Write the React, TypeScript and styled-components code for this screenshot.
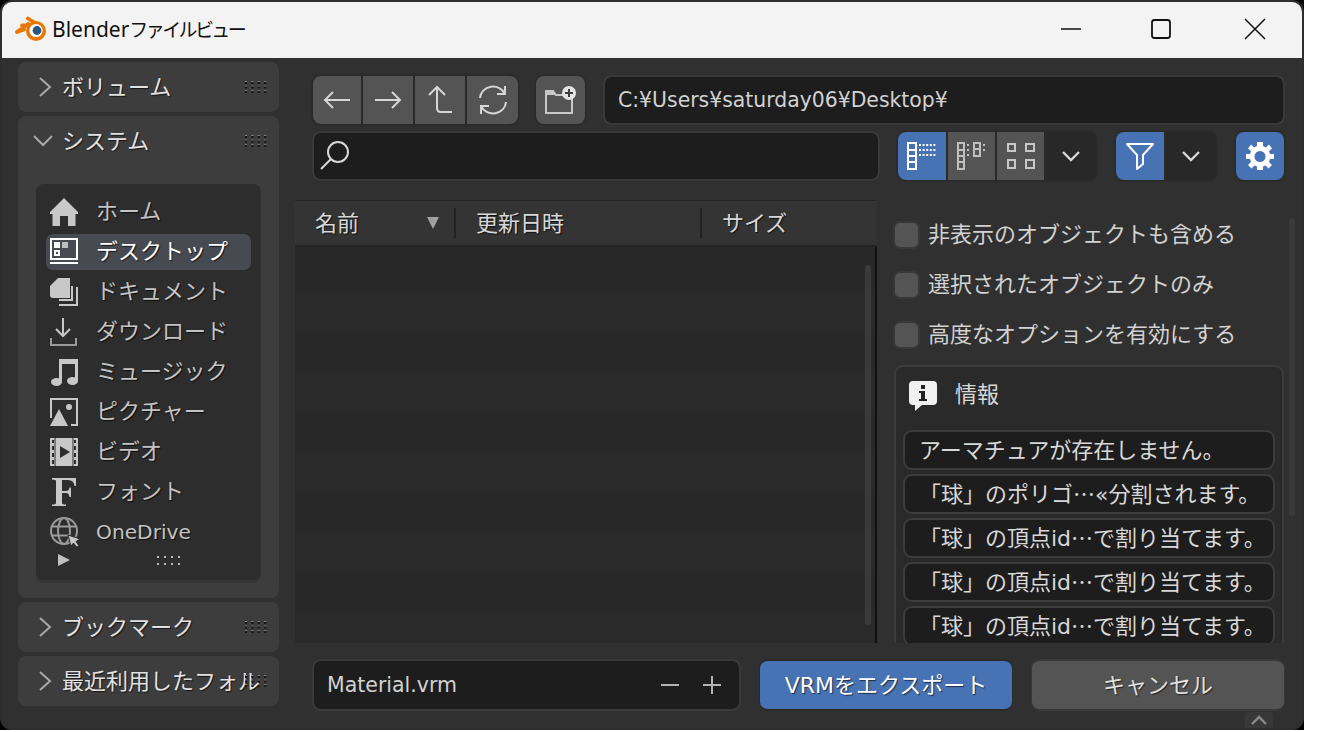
import React from 'react';
import styled, { createGlobalStyle } from 'styled-components';

const GlobalStyle = createGlobalStyle`
  html, body {
    margin: 0;
    padding: 0;
    background: #fff;
  }
  * {
    box-sizing: border-box;
  }
`;

const UI_FONT = `"DejaVu Sans", "Noto Sans CJK JP", sans-serif`;

const Frame = styled.div`
  width: 1304px;
  height: 730px;
  background: #000;
`;

const Win = styled.div`
  width: 100%;
  height: 100%;
  background: #303030;
  border: 2px solid #2e2e2e;
  border-radius: 12px;
  overflow: hidden;
  display: flex;
  flex-direction: column;
  font-family: ${UI_FONT};
  font-size: 22px;
  color: #d2d2d2;
`;

const TitleBar = styled.div`
  height: 56px;
  flex: none;
  background: #f3f3f3;
  display: flex;
  align-items: center;
  padding: 0 0 2px 13px;
  color: #111;
  font-family: "Noto Sans", "Noto Sans CJK JP", sans-serif;
  font-size: 21px;
`;

const TitleText = styled.span`
  margin-left: 5px;
  flex: 1;
`;

const TitleKana = styled.span`
  font-size: 19px;
  letter-spacing: -2.6px;
`;

const WinButton = styled.div`
  width: 94px;
  height: 54px;
  display: flex;
  align-items: center;
  justify-content: center;
`;

const Body = styled.div`
  flex: 1;
  min-height: 0;
  display: flex;
`;

const Sidebar = styled.div`
  width: 293px;
  flex: none;
  padding: 4px 0 0 16px;
  display: flex;
  flex-direction: column;
  gap: 4px;
`;

const Panel = styled.div<{ $h: number }>`
  width: 261px;
  height: ${p => p.$h}px;
  background: #3d3d3d;
  border-radius: 8px;
  flex: none;
`;

const PanelHead = styled.div`
  height: 50px;
  display: flex;
  align-items: center;
  padding-left: 44px;
  position: relative;
`;

const Chevron = styled.svg<{ $left: number }>`
  position: absolute;
  left: ${p => p.$left}px;
  top: 13px;
`;

const PanelLabel = styled.div`
  flex: 0 0 198px;
  overflow: hidden;
  white-space: nowrap;
  padding-bottom: 4px;
  color: #e2e2e2;
  text-shadow: 1px 1px 1px rgba(0, 0, 0, 0.65);
`;

const Grip = styled.div`
  margin-left: -15px;
  flex: none;
`;

const PlaceList = styled.div`
  margin: 18px 0 0 18px;
  width: 225px;
  height: 396px;
  background: #2d2d2d;
  border-radius: 8px;
  padding: 10px 10px 0;
  box-shadow: 0 3px 0 #353535;
`;

const Place = styled.div<{ $active?: boolean }>`
  height: 36px;
  margin-bottom: 4px;
  border-radius: 7px;
  padding-left: 4px;
  display: flex;
  align-items: center;
  gap: 18px;
  background: ${p => (p.$active ? '#474a51' : 'transparent')};
  color: ${p => (p.$active ? '#fff' : '#c4c4c4')};
  text-shadow: 1px 1px 1px rgba(0, 0, 0, 0.7);
  white-space: nowrap;
`;

const IconBox = styled.span`
  width: 28px;
  height: 30px;
  flex: none;
  display: flex;
  align-items: center;
  justify-content: flex-start;

  svg {
    flex: none;
  }
`;

const PlaceName = styled.span<{ $latin?: boolean }>`
  padding-bottom: ${p => (p.$latin ? '0' : '6px')};
  font-size: ${p => (p.$latin ? '20.2px' : '22px')};
`;

const ListFooter = styled.div`
  display: flex;
  align-items: flex-start;
  height: 14px;
  padding-left: 12px;
  gap: 87px;
`;

const Main = styled.div`
  flex: 1;
  min-width: 0;
  display: flex;
  flex-direction: column;
`;

const Toolbar = styled.div<{ $top: number }>`
  height: 50px;
  margin-top: ${p => p.$top}px;
  padding: 0 17px;
  display: flex;
  align-items: stretch;
  flex: none;
`;

const Group = styled.div<{ $ml?: number }>`
  display: flex;
  gap: 2px;
  border: 1px solid #2a2a2a;
  background: #2a2a2a;
  box-shadow: 0 0 0 1px #2c2c2c;
  border-radius: 9px;
  overflow: hidden;
  flex: none;
  margin-left: ${p => p.$ml ?? 0}px;
`;

const ToolButton = styled.div<{ $w: number; $tone?: 'blue' | 'dark' }>`
  width: ${p => p.$w}px;
  display: flex;
  align-items: center;
  justify-content: center;
  background: ${p => (p.$tone === 'blue' ? '#4772b3' : p.$tone === 'dark' ? '#282828' : '#545454')};
`;

const TextField = styled.div<{ $w?: number }>`
  background: #1d1d1d;
  border: 2px solid #3a3a3a;
  border-radius: 9px;
  display: flex;
  align-items: center;
  padding-left: 13px;
  ${p => (p.$w ? `flex: 0 0 ${p.$w}px;` : 'flex: 1;')}
`;

const Path = styled(TextField)`
  margin-left: 17px;
  font-size: 20.4px;
  white-space: nowrap;
`;

const Content = styled.div`
  height: 443px;
  margin-top: 19px;
  display: flex;
  flex: none;
`;

const FileList = styled.div`
  width: 582px;
  flex: none;
  display: flex;
  flex-direction: column;
  border-right: 2px solid #111;
`;

const FileHead = styled.div`
  height: 47px;
  flex: none;
  background: #343434;
  border-top: 1px solid #252525;
  border-bottom: 2px solid #242424;
  margin-right: -2px;
  display: flex;
  align-items: center;
  text-shadow: 1px 1px 1px rgba(0, 0, 0, 0.7);
  color: #d8d8d8;
`;

const Column = styled.div<{ $w: number; $border?: boolean }>`
  width: ${p => p.$w}px;
  height: 30px;
  padding-left: 20px;
  display: flex;
  align-items: center;
  justify-content: space-between;
  padding-right: 14px;
  border-right: ${p => (p.$border ? '2px solid #222' : 'none')};
`;

const ColumnText = styled.span`
  padding-bottom: 5px;
`;

const FileBody = styled.div`
  flex: 1;
  min-height: 0;
  display: flex;
  flex-direction: column;
  background: #282828;
  padding-top: 4px;
  overflow: hidden;
  position: relative;
`;

const Stripe = styled.div<{ $odd: boolean }>`
  height: 40px;
  flex: none;
  background: ${p => (p.$odd ? '#2a2a2a' : '#282828')};
`;

const Scroll = styled.div<{ $top: number; $h: number; $right: number }>`
  position: absolute;
  top: ${p => p.$top}px;
  right: ${p => p.$right}px;
  width: 6px;
  height: ${p => p.$h}px;
  border-radius: 3px;
  background: #3a3a3a;
`;

const Side = styled.div`
  flex: 1;
  min-width: 0;
  position: relative;
  padding: 18px 19px 0 16px;
  overflow: hidden;
`;

const CheckRow = styled.div`
  height: 50px;
  padding-top: 3px;
  display: flex;
  gap: 8px;
  white-space: nowrap;
  align-items: flex-start;
  line-height: 27px;
`;

const Check = styled.div`
  width: 27px;
  height: 28px;
  flex: none;
  background: #545454;
  border: 2px solid #383838;
  border-radius: 7px;
`;

const Info = styled.div`
  margin: -3px 0 0 1px;
  width: 390px;
  height: 330px;
  background: #2a2a2a;
  border: 2px solid #3c3c3c;
  border-radius: 9px;
  padding: 0 7px;
`;

const InfoHead = styled.div`
  height: 63px;
  display: flex;
  align-items: center;
  padding: 0 0 6px 6px;
  gap: 18px;
  color: #d8d8d8;
`;

const InfoTitle = styled.span`
  padding-bottom: 7px;
`;

const Message = styled.div`
  height: 40px;
  margin-bottom: 4px;
  background: #1d1d1d;
  border: 2px solid #3c3c3c;
  border-radius: 9px;
  padding: 0 0 4px 14px;
  display: flex;
  align-items: center;
  white-space: pre;
  color: #d8d8d8;
`;

const Dots = styled.span`
  font-family: "Noto Sans CJK JP", sans-serif;
`;

const Bottom = styled.div`
  height: 52px;
  margin-top: 16px;
  padding: 0 17px;
  display: flex;
  flex: none;
  gap: 18px;
`;

const Name = styled(TextField)`
  font-size: 20.5px;
  justify-content: space-between;
  padding-right: 17px;
`;

const Steppers = styled.div`
  display: flex;
  gap: 22px;
`;

const ActionButton = styled.div<{ $primary?: boolean }>`
  flex: 0 0 254px;
  display: flex;
  align-items: center;
  justify-content: center;
  padding-bottom: 5px;
  border-radius: 9px;
  border-style: solid;
  border-width: 2px 1px;
  border-color: ${p => (p.$primary ? '#2a2a2a' : '#383838')};
  background: ${p => (p.$primary ? '#4772b3' : '#545454')};
  color: ${p => (p.$primary ? '#fff' : '#e0e0e0')};
  text-shadow: 1px 1px 1px rgba(0, 0, 0, 0.6);
  white-space: nowrap;
`;

const TabRow = styled.div`
  flex: 1;
  display: flex;
  justify-content: flex-end;
  align-items: flex-end;
  padding-right: 29px;
`;

const CornerTab = styled.div`
  width: 28px;
  height: 16px;
  background: #383838;
  border-radius: 4px 4px 0 0;
  display: flex;
  align-items: center;
  justify-content: center;
`;

const GripDots = ({ plain }: { plain?: boolean }) => (
  <svg width="24" height="12" style={{ display: 'block' }}>
    {(plain ? [0, 1] : [0, 1, 2]).map(r =>
      [0, 1, 2, 3].map(c =>
        plain ? (
          <rect key={`${r}-${c}`} x={c * 7} y={r * 7 + 2} width="2" height="2" fill="#b8b8b8" />
        ) : (
          <g key={`${r}-${c}`}>
            <rect x={c * 6.4} y={r * 4.6} width="2" height="1" fill="#8a8a8a" />
            <rect x={c * 6.4} y={r * 4.6 + 1} width="2" height="2" fill="#111" />
          </g>
        ),
      ),
    )}
  </svg>
);

const BlenderLogo = () => (
  <svg width="32" height="28" viewBox="0 0 32 28" style={{ display: 'block' }}>
    <path d="M2 17 L13 9 M7 10.5 L15 10.5 M13 3.5 L20 8 M2 17 L9 14.5" stroke="#ea7600" strokeWidth="3.8" strokeLinecap="round" fill="none" />
    <circle cx="21" cy="16" r="10" fill="#ea7600" />
    <circle cx="21" cy="15.5" r="6.6" fill="#fff" />
    <circle cx="22" cy="15.5" r="4.4" fill="#265787" />
  </svg>
);

const ico = { stroke: '#d6d6d6', fill: 'none', strokeWidth: 2 };

const HomeIcon = () => (
  <svg width="28" height="28" viewBox="0 0 28 28">
    <path fill="#c8c8c8" d="M14 0 L28 14 V16 H25.5 V28 H18 V18 H10 V28 H2.5 V16 H0 V14 Z" />
  </svg>
);

const DesktopIcon = () => (
  <svg width="28" height="28" viewBox="0 0 28 28">
    <rect x="1" y="1" width="26" height="20" fill="none" stroke="#fff" strokeWidth="2" />
    <rect x="4" y="4" width="6" height="6" fill="#fff" />
    <rect x="12" y="4" width="6" height="6" fill="#bdbdbd" />
    <rect x="5" y="13" width="4" height="4" fill="none" stroke="#fff" strokeWidth="2" />
    <rect x="0" y="24" width="28" height="2" fill="#fff" />
  </svg>
);

const DocIcon = () => (
  <svg width="28" height="28" viewBox="0 0 28 28">
    <path fill="#c8c8c8" d="M8 0 H20 V20 H3 Q0 20 0 17 V8 Z" />
    <path d="M22 8 V22 H9 M27 9 V27 H9" fill="none" stroke="#c8c8c8" strokeWidth="2" />
  </svg>
);

const DownloadIcon = () => (
  <svg width="28" height="28" viewBox="0 0 28 28">
    <path d="M13 0 V18 M6 11 L13 18 L20 11" fill="none" stroke="#c8c8c8" strokeWidth="2" />
    <path d="M1 20 V27 H26 V20" fill="none" stroke="#9a9a9a" strokeWidth="2" />
  </svg>
);

const MusicIcon = () => (
  <svg width="28" height="28" viewBox="0 0 28 28">
    <path fill="#c8c8c8" d="M9 1 H28 V6 H12 V23 H9 Z M25 6 H28 V23 H25 Z" />
    <ellipse cx="6.5" cy="24" rx="5.5" ry="4" fill="#c8c8c8" />
    <ellipse cx="22.5" cy="23" rx="5.5" ry="4" fill="#c8c8c8" />
  </svg>
);

const ImageIcon = () => (
  <svg width="28" height="28" viewBox="0 0 28 28">
    <path d="M1 20 V1 H27 V27 H21" fill="none" stroke="#c8c8c8" strokeWidth="2" />
    <path fill="#c8c8c8" d="M0 28 L9 11 L18 28 Z" />
    <circle cx="19" cy="9" r="3" fill="#c8c8c8" />
  </svg>
);

const VideoIcon = () => (
  <svg width="28" height="28" viewBox="0 0 28 28">
    <path fill="#c8c8c8" fillRule="evenodd" d="M0 0 H28 V28 H0 Z M2 2 V5 H4 V2 Z M24 2 V5 H26 V2 Z M2 8 V12 H4 V8 Z M24 8 V12 H26 V8 Z M2 15 V19 H4 V15 Z M24 15 V19 H26 V15 Z M2 22 V26 H4 V22 Z M24 22 V26 H26 V22 Z M10 8 V20 L20 14 Z" />
    <path d="M5 0 V28 M23 0 V28" stroke="#2d2d2d" strokeWidth="1" />
  </svg>
);

const FontIcon = () => (
  <svg width="28" height="28" viewBox="0 0 28 28">
    <path fill="#c8c8c8" d="M2 0 H26 V8 H24.5 Q24 2 18 2 H12 V13 H16 Q19 13 19.5 9.5 H21 V19 H19.5 Q19 15 16 15 H12 V25 Q12 26.5 16 26.5 V28 H2 V26.5 Q6 26.5 6 25 V3 Q6 1.5 2 1.5 Z" />
  </svg>
);

const GlobeIcon = () => (
  <svg width="30" height="30" viewBox="0 0 30 30">
    <g fill="none" stroke="#9a9a9a" strokeWidth="2">
      <circle cx="14" cy="14" r="13" />
      <ellipse cx="14" cy="14" rx="6" ry="13" />
      <path d="M2 9.5 H26 M2 18.5 H20" />
    </g>
    <path fill="#c8c8c8" stroke="#2d2d2d" strokeWidth="1" d="M18 18 L30 22 L26 24.5 L29 29 L26.5 30 L23.5 26 L21 29 Z" />
  </svg>
);

const places = [
  { label: 'ホーム', icon: <HomeIcon /> },
  { label: 'デスクトップ', icon: <DesktopIcon />, active: true },
  { label: 'ドキュメント', icon: <DocIcon /> },
  { label: 'ダウンロード', icon: <DownloadIcon /> },
  { label: 'ミュージック', icon: <MusicIcon /> },
  { label: 'ピクチャー', icon: <ImageIcon /> },
  { label: 'ビデオ', icon: <VideoIcon /> },
  { label: 'フォント', icon: <FontIcon /> },
];

const Right = () => (
  <Chevron $left={15} width="24" height="24" viewBox="0 0 24 24">
    <path d="M7 3 L17 12 L7 21" fill="none" stroke="#a8a8a8" strokeWidth="2" />
  </Chevron>
);

const Down = () => (
  <Chevron $left={13} width="24" height="24" viewBox="0 0 24 24">
    <path d="M3 7 L12 16 L21 7" fill="none" stroke="#a8a8a8" strokeWidth="2" />
  </Chevron>
);

const Drop = () => (
  <svg width="20" height="12" viewBox="0 0 20 12">
    <path d="M2 2 L10 10 L18 2" fill="none" stroke="#d8d8d8" strokeWidth="2.4" />
  </svg>
);

const messages = [
  ['アーマチュアが存在しません。'],
  ['「球」のポリゴ', '«分割されます。'],
  ['「球」の頂点id', 'で割り当てます。'],
  ['「球」の頂点id', 'で割り当てます。'],
  ['「球」の頂点id', 'で割り当てます。'],
];

const App = () => {
  return (
    <>
      <GlobalStyle />
      <Frame>
        <Win>
          <TitleBar>
            <BlenderLogo />
            <TitleText>
              Blender<TitleKana>ファイルビュー</TitleKana>
            </TitleText>
            <WinButton>
              <svg width="22" height="22" style={{ marginLeft: 8 }}><path d="M1 11 H21" stroke="#111" strokeWidth="1.6" /></svg>
            </WinButton>
            <WinButton>
              <svg width="22" height="22"><rect x="2" y="2" width="18" height="18" rx="2.5" fill="none" stroke="#111" strokeWidth="1.8" /></svg>
            </WinButton>
            <WinButton>
              <svg width="22" height="22"><path d="M1 1 L21 21 M21 1 L1 21" stroke="#111" strokeWidth="1.5" /></svg>
            </WinButton>
          </TitleBar>

          <Body>
            <Sidebar>
              <Panel $h={50}>
                <PanelHead>
                  <Right />
                  <PanelLabel>ボリューム</PanelLabel>
                  <Grip><GripDots /></Grip>
                </PanelHead>
              </Panel>
              <Panel $h={482}>
                <PanelHead>
                  <Down />
                  <PanelLabel>システム</PanelLabel>
                  <Grip><GripDots /></Grip>
                </PanelHead>
                <PlaceList>
                  {places.map(item => (
                    <Place key={item.label} $active={item.active}>
                      <IconBox>{item.icon}</IconBox>
                      <PlaceName>{item.label}</PlaceName>
                    </Place>
                  ))}
                  <Place>
                    <IconBox><GlobeIcon /></IconBox>
                    <PlaceName $latin>OneDrive</PlaceName>
                  </Place>
                  <ListFooter>
                    <svg width="12" height="12"><path d="M0 0 L12 6 L0 12 Z" fill="#c0c0c0" /></svg>
                    <GripDots plain />
                  </ListFooter>
                </PlaceList>
              </Panel>
              <Panel $h={50}>
                <PanelHead>
                  <Right />
                  <PanelLabel>ブックマーク</PanelLabel>
                  <Grip><GripDots /></Grip>
                </PanelHead>
              </Panel>
              <Panel $h={50}>
                <PanelHead>
                  <Right />
                  <PanelLabel>最近利用したフォルダー</PanelLabel>
                  <Grip><GripDots /></Grip>
                </PanelHead>
              </Panel>
            </Sidebar>

            <Main>
              <Toolbar $top={17}>
                <Group>
                  <ToolButton $w={48}>
                    <svg width="30" height="24"><path d="M28 12 H3 M11 4 L3 12 L11 20" {...ico} /></svg>
                  </ToolButton>
                  <ToolButton $w={50}>
                    <svg width="30" height="24"><path d="M2 12 H27 M19 4 L27 12 L19 20" {...ico} /></svg>
                  </ToolButton>
                  <ToolButton $w={50}>
                    <svg width="28" height="30"><path d="M3 10 L11 2 L19 10 M11 2 V23 Q11 27 15 27 H26" {...ico} /></svg>
                  </ToolButton>
                  <ToolButton $w={51}>
                    <svg width="30" height="30" viewBox="0 0 30 30">
                      <path d="M2 13 A13 12 0 0 1 27 9 M27 1 V9 H19 M28 17 A13 12 0 0 1 3 21 M3 29 V21 H11" {...ico} />
                    </svg>
                  </ToolButton>
                </Group>
                <Group $ml={16}>
                  <ToolButton $w={49}>
                    <svg width="32" height="28" viewBox="0 0 32 28">
                      <path d="M1 5 H8 L11 9 H27 V27 H1 Z" fill="none" stroke="#c8c8c8" strokeWidth="2" />
                      <path d="M1 4 H8 L11 9 H1 Z" fill="#c8c8c8" />
                      <circle cx="24" cy="7" r="7" fill="#e4e4e4" />
                      <path d="M24 3 V11 M20 7 H28" stroke="#3c3c3c" strokeWidth="2" />
                    </svg>
                  </ToolButton>
                </Group>
                <Path>C:¥Users¥saturday06¥Desktop¥</Path>
              </Toolbar>

              <Toolbar $top={6}>
                <TextField $w={568}>
                  <svg width="32" height="30" viewBox="0 0 32 30" style={{ marginLeft: -9 }}>
                    <circle cx="20" cy="11" r="10" fill="none" stroke="#d8d8d8" strokeWidth="2" />
                    <path d="M13 18 L3 28" stroke="#d8d8d8" strokeWidth="2" />
                  </svg>
                </TextField>
                <Group $ml={17}>
                  <ToolButton $w={48} $tone="blue">
                    <svg width="30" height="28" viewBox="0 0 30 28">
                      <path d="M1 1 H9 V27 H1 Z M1 8 H9 M1 14 H9 M1 20 H9" fill="none" stroke="#fff" strokeWidth="2" />
                      <path d="M12 3 H30 M12 8 H30 M12 13 H30" stroke="#fff" strokeWidth="2" strokeDasharray="2 1.6" />
                    </svg>
                  </ToolButton>
                  <ToolButton $w={47}>
                    <svg width="30" height="28" viewBox="0 0 30 28">
                      <path d="M1 1 H7 V27 H1 Z M1 8 H7 M1 14 H7 M1 20 H7 M17 1 H23 V14 H17 Z M17 7 H23" fill="none" stroke="#c0c0c0" strokeWidth="2" />
                      <path d="M10 3 H13 M10 8 H13 M10 13 H13 M26 3 H29 M26 8 H29" stroke="#c0c0c0" strokeWidth="2" strokeDasharray="2 1" />
                    </svg>
                  </ToolButton>
                  <ToolButton $w={47}>
                    <svg width="30" height="28" viewBox="0 0 30 28">
                      <path d="M2 2 H9 V9 H2 Z M20 2 H28 V9 H20 Z M2 18 H9 V26 H2 Z M20 18 H28 V26 H20 Z" fill="none" stroke="#c8c8c8" strokeWidth="2" />
                    </svg>
                  </ToolButton>
                  <ToolButton $w={50} $tone="dark"><Drop /></ToolButton>
                </Group>
                <Group $ml={18}>
                  <ToolButton $w={48} $tone="blue">
                    <svg width="30" height="30" viewBox="0 0 30 30">
                      <path d="M2 3 H28 L18 14 V23 L12 28 V14 Z" fill="none" stroke="#fff" strokeWidth="2" strokeLinejoin="round" />
                    </svg>
                  </ToolButton>
                  <ToolButton $w={50} $tone="dark"><Drop /></ToolButton>
                </Group>
                <Group $ml={18}>
                  <ToolButton $w={48} $tone="blue">
                    <svg width="30" height="30" viewBox="0 0 30 30">
                      <path fill="#fff" fillRule="evenodd" d="M12 1 H18 V5 L21 6.5 L24 3.5 L27 7.5 L24 10 L25 13 H29 V18 H25 L24 21 L27 24 L23.5 27.5 L20.5 24.5 L18 25.5 V29 H12 V25.5 L9.5 24.5 L6.5 27.5 L3 24 L6 21 L5 18 H1 V13 H5 L6 10 L3 7.5 L6 3.5 L9 6.5 L12 5 Z M15 10 A5.5 5.5 0 1 0 15 21 A5.5 5.5 0 1 0 15 10 Z" />
                    </svg>
                  </ToolButton>
                </Group>
              </Toolbar>

              <Content>
                <FileList>
                  <FileHead>
                    <Column $w={161} $border>
                      <ColumnText>名前</ColumnText>
                      <svg width="14" height="12"><path d="M1 0 H13 L7 12 Z" fill="#a0a0a0" /></svg>
                    </Column>
                    <Column $w={246} $border><ColumnText>更新日時</ColumnText></Column>
                    <Column $w={170}><ColumnText>サイズ</ColumnText></Column>
                  </FileHead>
                  <FileBody>
                    {Array.from({ length: 10 }).map((_, i) => (
                      <Stripe key={i} $odd={i % 2 === 1} />
                    ))}
                    <Scroll $top={18} $h={360} $right={4} />
                  </FileBody>
                </FileList>
                <Side>
                  <CheckRow><Check />非表示のオブジェクトも含める</CheckRow>
                  <CheckRow><Check />選択されたオブジェクトのみ</CheckRow>
                  <CheckRow><Check />高度なオプションを有効にする</CheckRow>
                  <Info>
                    <InfoHead>
                      <svg width="28" height="30" viewBox="0 0 28 30">
                        <path fill="#f0f0f0" d="M4 0 H24 Q28 0 28 4 V20 Q28 24 24 24 H13 L6 30 V24 H4 Q0 24 0 20 V4 Q0 0 4 0 Z" />
                        <path fill="#222" d="M12 4 H16 V8 H12 Z M10 10 H16 V18 H18 V20 H10 V18 H12 V12 H10 Z" />
                      </svg>
                      <InfoTitle>情報</InfoTitle>
                    </InfoHead>
                    {messages.map(([head, tail], i) => (
                      <Message key={i}>
                        {head}
                        {tail && <Dots>…</Dots>}
                        {tail}
                      </Message>
                    ))}
                  </Info>
                  <Scroll $top={18} $h={298} $right={7} />
                </Side>
              </Content>

              <Bottom>
                <Name $w={429}>
                  Material.vrm
                  <Steppers>
                    <svg width="20" height="20"><path d="M1 10 H19" stroke="#b4b4b4" strokeWidth="2" /></svg>
                    <svg width="20" height="20"><path d="M1 10 H19 M10 1 V19" stroke="#b4b4b4" strokeWidth="2" /></svg>
                  </Steppers>
                </Name>
                <ActionButton $primary>VRMをエクスポート</ActionButton>
                <ActionButton>キャンセル</ActionButton>
              </Bottom>
              <TabRow>
                <CornerTab>
                  <svg width="18" height="10"><path d="M2 9 L9 2 L16 9" fill="none" stroke="#8c8c8c" strokeWidth="2.4" /></svg>
                </CornerTab>
              </TabRow>
            </Main>
          </Body>
        </Win>
      </Frame>
    </>
  );
};

export default App;
